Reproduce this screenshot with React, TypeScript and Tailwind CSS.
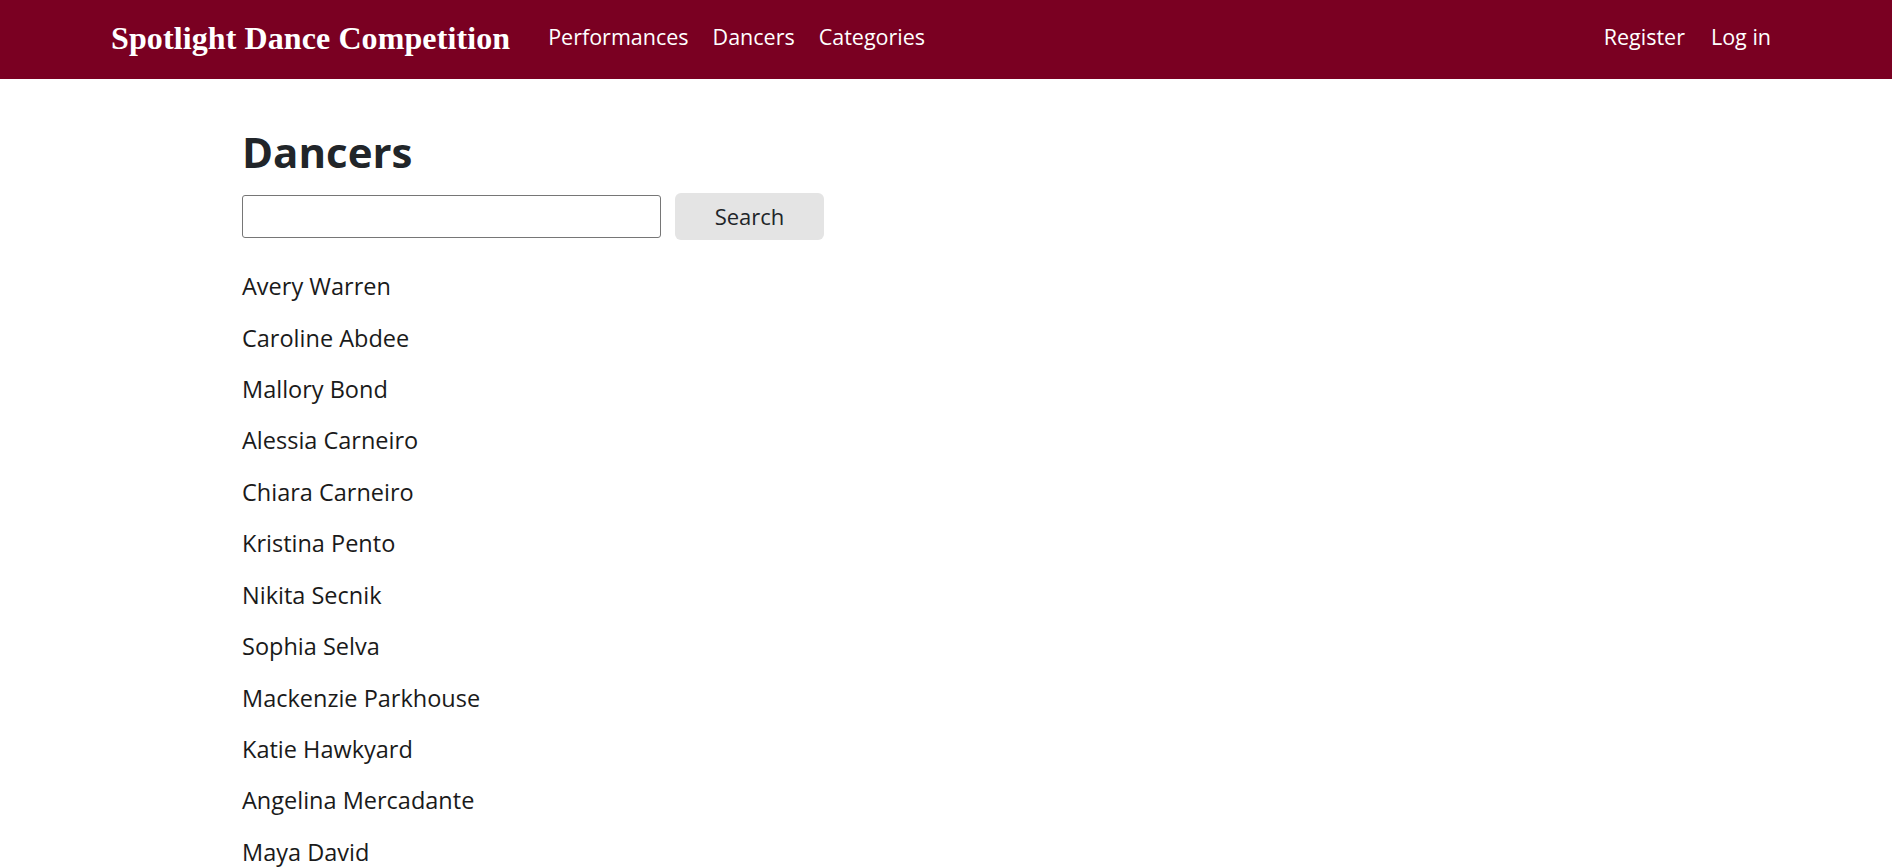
import React from "react";

const dancers = [
  "Avery Warren",
  "Caroline Abdee",
  "Mallory Bond",
  "Alessia Carneiro",
  "Chiara Carneiro",
  "Kristina Pento",
  "Nikita Secnik",
  "Sophia Selva",
  "Mackenzie Parkhouse",
  "Katie Hawkyard",
  "Angelina Mercadante",
  "Maya David",
];

export default function App() {
  return (
    <div className="min-h-screen bg-white text-[#212529]" style={{ fontFamily: "'Open Sans', Lato, sans-serif" }}>
      <header className="h-[79px] bg-[#7a0022] flex items-center pl-[111px] pr-[121px] pb-[4px]">
        <a className="text-white text-[32px] font-bold tracking-[0.1px] mr-[38px]" style={{ fontFamily: "'Liberation Serif', 'DejaVu Serif', serif" }}>
          Spotlight Dance Competition
        </a>
        <nav className="flex gap-[24px] text-white text-[21.5px]">
          <a>Performances</a>
          <a>Dancers</a>
          <a>Categories</a>
        </nav>
        <div className="ml-auto flex gap-[26px] text-white text-[21.5px]">
          <a>Register</a>
          <a>Log in</a>
        </div>
      </header>
      <main className="pl-[242px] pt-[45px]">
        <h1 className="text-[42px] font-bold leading-[56px] text-[#212529]">Dancers</h1>
        <form className="flex items-center gap-[14px] mt-[13px]" onSubmit={(e) => e.preventDefault()}>
          <input className="w-[419px] h-[43px] border border-[#767676] rounded-[3px] px-2 text-[20px]" />
          <button className="w-[149px] h-[47px] bg-[#e4e4e4] rounded-[6px] text-[22px] text-[#212529]">Search</button>
        </form>
        <ul className="mt-[21px] flex flex-col">
          {dancers.map((d) => (
            <li key={d} className="h-[51.45px] flex items-center text-[23.5px] text-[#1a1a1a]">
              {d}
            </li>
          ))}
        </ul>
      </main>
    </div>
  );
}
